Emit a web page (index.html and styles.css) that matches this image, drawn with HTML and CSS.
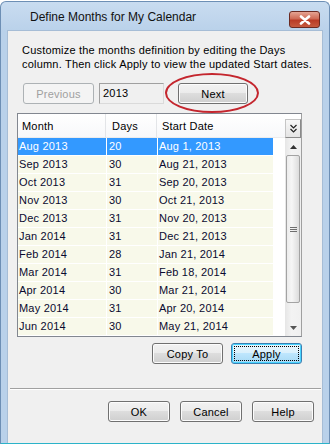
FILE: index.html
```html
<!DOCTYPE html>
<html lang="en">
<head>
    <meta charset="UTF-8">
    <title>Define Months for My Calendar</title>
    <link rel="stylesheet" href="styles.css">
</head>
<body>
<div class="window">
    <div class="titlebar">
        <span class="title">Define Months for My Calendar</span>
        <span class="close">
            <svg width="14" height="10" viewBox="0 0 14 10"><path d="M3 1.5 L11 8.5 M11 1.5 L3 8.5" stroke="#fff" stroke-width="2.6" stroke-linecap="round"/></svg>
        </span>
    </div>
    <div class="client">
        <p class="intro">Customize the months definition by editing the Days column. Then click Apply to view the updated Start dates.</p>
        <div class="nav">
            <button class="btn prev" disabled>Previous</button>
            <div class="year">2013</div>
            <div class="next-wrap">
                <button class="btn next">Next</button>
                <span class="ring"></span>
            </div>
        </div>
        <div class="table">
            <div class="body">
                <div class="head">
                    <span class="hc c1">Month</span>
                    <span class="hc c2">Days</span>
                    <span class="hc c3">Start Date</span>
                </div>
                <div class="rows">
                    <div class="row sel"><span>Aug 2013</span><span>20</span><span>Aug 1, 2013</span></div>
                    <div class="row"><span>Sep 2013</span><span>30</span><span>Aug 21, 2013</span></div>
                    <div class="row"><span>Oct 2013</span><span>31</span><span>Sep 20, 2013</span></div>
                    <div class="row"><span>Nov 2013</span><span>30</span><span>Oct 21, 2013</span></div>
                    <div class="row"><span>Dec 2013</span><span>31</span><span>Nov 20, 2013</span></div>
                    <div class="row"><span>Jan 2014</span><span>31</span><span>Dec 21, 2013</span></div>
                    <div class="row"><span>Feb 2014</span><span>28</span><span>Jan 21, 2014</span></div>
                    <div class="row"><span>Mar 2014</span><span>31</span><span>Feb 18, 2014</span></div>
                    <div class="row"><span>Apr 2014</span><span>30</span><span>Mar 21, 2014</span></div>
                    <div class="row"><span>May 2014</span><span>31</span><span>Apr 20, 2014</span></div>
                    <div class="row"><span>Jun 2014</span><span>30</span><span>May 21, 2014</span></div>
                </div>
            </div>
            <div class="side">
                <div class="chooser">
                    <svg width="9" height="9" viewBox="0 0 9 9"><path d="M1.5 1 L4.5 4 L7.5 1 M1.5 5 L4.5 8 L7.5 5" fill="none" stroke="#222" stroke-width="1.2"/></svg>
                </div>
                <div class="scroll">
                    <div class="arrow up"><svg width="7" height="4" viewBox="0 0 7 4"><path d="M0 4 L3.5 0 L7 4Z" fill="#333"/></svg></div>
                    <div class="thumb"><span class="grip"></span></div>
                    <div class="track"></div>
                    <div class="arrow down"><svg width="7" height="4" viewBox="0 0 7 4"><path d="M0 0 L3.5 4 L7 0Z" fill="#555"/></svg></div>
                </div>
            </div>
        </div>
        <div class="actions">
            <button class="btn">Copy To</button>
            <button class="btn default"><span class="focus">Apply</span></button>
        </div>
        <div class="sep"></div>
        <div class="footer">
            <button class="btn">OK</button>
            <button class="btn">Cancel</button>
            <button class="btn">Help</button>
        </div>
    </div>
</div>
</body>
</html>
```

FILE: styles.css
```css
body{
    margin: 0;
    background: #fff;
    font-family: "Liberation Sans", Arial, sans-serif;
    font-size: 11px;
    color: #000;
}
.window{
    width: 328px;
    height: 441px;
    margin-top: 1px;
    background: linear-gradient(#c9dcf0, #b9d1ea 30px);
    border: 1px solid #6d8fb5;
    border-bottom: 2px solid #2bb3c9;
    border-radius: 6px 6px 0 0;
    display: flex;
    flex-direction: column;
}
.titlebar{
    height: 28px;
    display: flex;
    align-items: center;
    padding: 0 9px 0 29px;
}
.title{
    flex: 1;
    font-size: 12px;
    color: #111;
    padding-top: 1px;
}
.close{
    width: 29px;
    height: 15px;
    margin-top: 7px;
    border: 1px solid #6b2a22;
    border-radius: 3px;
    background: linear-gradient(#e5a493, #cf6a55 45%, #b93b26 55%, #c65a3f);
    display: flex;
    align-items: center;
    justify-content: center;
}
.client{
    margin: 0 6px;
    flex: 1;
    background: #f0f0f0;
    border: 1px solid #a6bdd6;
    border-bottom: none;
    position: relative;
    letter-spacing: 0.2px;
}
.intro{
    margin: 12px 0 0 14px;
    width: 296px;
    line-height: 14px;
    color: #000;
}
.nav{
    display: flex;
    align-items: center;
    margin: 12px 0 0 15px;
    height: 21px;
}
.btn{
    font-family: "Liberation Sans", Arial, sans-serif;
    font-size: 11px;
    letter-spacing: 0.2px;
    color: #000;
    width: 71px;
    height: 21px;
    padding: 0;
    border: 1px solid #707070;
    border-radius: 3px;
    background: linear-gradient(#f2f2f2, #ebebeb 50%, #dddddd 50%, #cfcfcf);
    box-shadow: inset 0 0 0 1px #fcfcfc;
}
.prev{
    color: #a0a0a0;
    border-color: #adb2b5;
    background: #f4f4f4;
    box-shadow: none;
}
.year{
    width: 60px;
    height: 19px;
    margin-left: 5px;
    border: 1px solid #abadb3;
    border-color: #a0a0a0 #dadada #dadada #a0a0a0;
    background: #f0f0f0;
    line-height: 19px;
    padding-left: 3px;
}
.next-wrap{
    margin-left: 14px;
    position: relative;
}
.next{
    width: 70px;
}
.ring{
    position: absolute;
    left: -13px;
    top: -10px;
    width: 90px;
    height: 36px;
    border: 2px solid #c4262e;
    border-radius: 50%;
    pointer-events: none;
}
.table{
    margin: 9px 0 0 9px;
    width: 283px;
    height: 222px;
    border: 1px solid #828790;
    border-right-color: #a0a0a0;
    background: #fff;
    display: flex;
    overflow: hidden;
}
.body{
    width: 267px;
    display: flex;
    flex-direction: column;
}
.head{
    height: 25px;
    display: grid;
    grid-template-columns: 88px 51px 128px;
    background: linear-gradient(#ffffff, #f7f8fa);
}
.hc{
    display: flex;
    align-items: center;
    padding-left: 4px;
    border-right: 1px solid #e3e5e8;
    border-bottom: 1px solid #ececec;
}
.hc.c2{
    padding-left: 6px;
}
.hc.c3{
    padding-left: 5px;
    border-right: none;
}
.rows{
    display: flex;
    flex-direction: column;
}
.row{
    height: 17px;
    display: grid;
    grid-template-columns: 88px 50px 115px;
    column-gap: 1px;
    border-bottom: 1px solid #fff;
    color: #0a0a30;
    line-height: 17px;
}
.row span{
    background: #f8f9ea;
    padding-left: 1px;
}
.row span:nth-child(2){
    padding-left: 2px;
}
.row.sel span{
    background: #3399ff;
    color: #fff;
}
.side{
    width: 16px;
    display: flex;
    flex-direction: column;
}
.chooser{
    height: 19px;
    margin-top: 5px;
    border: 1px solid #c5c5c5;
    border-right-color: #8a8a8a;
    border-bottom-color: #8a8a8a;
    background: linear-gradient(#f7f7f7, #e4e4e4);
    display: flex;
    align-items: center;
    justify-content: center;
    box-sizing: border-box;
}
.scroll{
    flex: 1;
    display: flex;
    flex-direction: column;
    background: linear-gradient(90deg, #e6e6e6, #f3f3f3 40%, #f0f0f0);
}
.arrow{
    height: 17px;
    display: flex;
    align-items: center;
    justify-content: center;
}
.thumb{
    height: 146px;
    margin: 0 1px;
    border: 1px solid #a3a3a3;
    border-radius: 2px;
    background: linear-gradient(90deg, #ececec, #f6f6f6 40%, #dcdcdc);
    display: flex;
    align-items: center;
    justify-content: center;
}
.grip{
    width: 7px;
    height: 5px;
    background: repeating-linear-gradient(#6e6e6e 0 1px, transparent 1px 2px);
}
.track{
    flex: 1;
}
.actions{
    display: flex;
    justify-content: flex-end;
    gap: 8px;
    width: 294px;
    margin-top: 6px;
}
.btn.default{
    border-color: #3c7fb1;
    background: linear-gradient(#eaf6fd, #d9f0fc 50%, #bee6fd 50%, #a7d9f5);
    box-shadow: inset 0 0 0 1px #48d4ff;
    padding: 2px;
}
.focus{
    display: flex;
    align-items: center;
    justify-content: center;
    height: 100%;
    border: 1px dotted #000;
    box-sizing: border-box;
}
.sep{
    margin: 24px 1px 0 2px;
    border-top: 1px solid #a0a0a0;
    border-bottom: 1px solid #fff;
}
.footer{
    display: flex;
    justify-content: flex-end;
    gap: 10px;
    margin: 11px 8px 0 0;
}
.footer .btn{
    width: 62px;
}
```
